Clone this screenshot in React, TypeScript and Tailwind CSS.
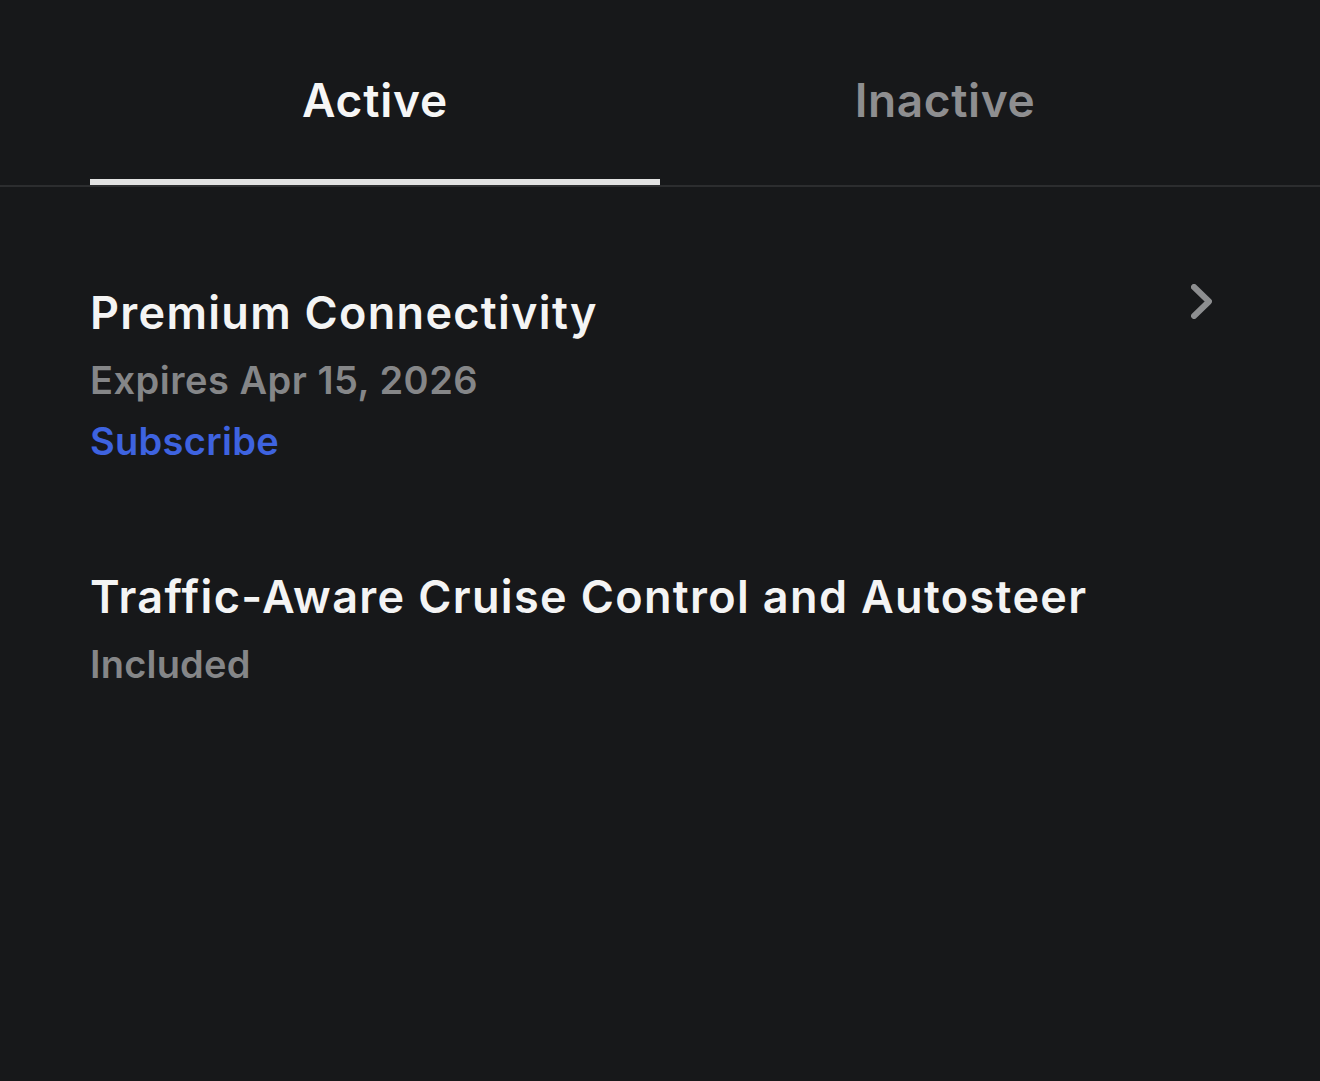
import React from "react";

const font = { fontFamily: "Inter, 'Noto Sans', sans-serif" };

const Chevron = () => (
  <svg width="21" height="35" viewBox="0 0 21 35" fill="none" className="mt-[-2px] shrink-0">
    <polyline
      points="3,3 18,17.5 3,32"
      stroke="#8d8e90"
      strokeWidth="6"
      strokeLinecap="round"
      strokeLinejoin="round"
    />
  </svg>
);

export default function App() {
  return (
    <div className="w-[1320px] h-[1081px] bg-[#17181a] overflow-hidden" style={font}>
      {/* tabs */}
      <div className="h-[187px] border-b-2 border-[#2c2d2f] px-[90px] flex">
        <div className="flex-1 flex flex-col items-center">
          <div className="pt-[71px] h-[179px] text-[46px] leading-[58px] font-semibold tracking-[0.8px] text-[#f6f6f6]">
            Active
          </div>
          <div className="w-full h-[6px] bg-[#e2e2e2]" />
        </div>
        <div className="flex-1 flex flex-col items-center">
          <div className="pt-[71px] text-[46px] leading-[58px] font-semibold tracking-[0.6px] text-[#8e8e90]">
            Inactive
          </div>
        </div>
      </div>

      {/* items */}
      <div className="pl-[90px] pr-[108px] pt-[99px]">
        <div className="flex items-start justify-between">
          <div className="flex flex-col">
            <div className="text-[45px] leading-[54px] font-semibold tracking-[1.3px] text-[#f4f4f4]">
              Premium Connectivity
            </div>
            <div className="mt-[15px] text-[38px] leading-[50px] font-semibold tracking-[0.5px] text-[#858688]">
              Expires Apr 15, 2026
            </div>
            <div className="mt-[11px] text-[38px] leading-[50px] font-semibold tracking-[0.3px] text-[#3e63e0]">
              Subscribe
            </div>
          </div>
          <Chevron />
        </div>

        <div className="mt-[104px] flex flex-col">
          <div className="text-[45px] leading-[54px] font-semibold tracking-[1.35px] text-[#f4f4f4]">
            Traffic-Aware Cruise Control and Autosteer
          </div>
          <div className="mt-[15px] text-[38px] leading-[50px] font-semibold tracking-[0.2px] text-[#858688]">
            Included
          </div>
        </div>
      </div>
    </div>
  );
}
